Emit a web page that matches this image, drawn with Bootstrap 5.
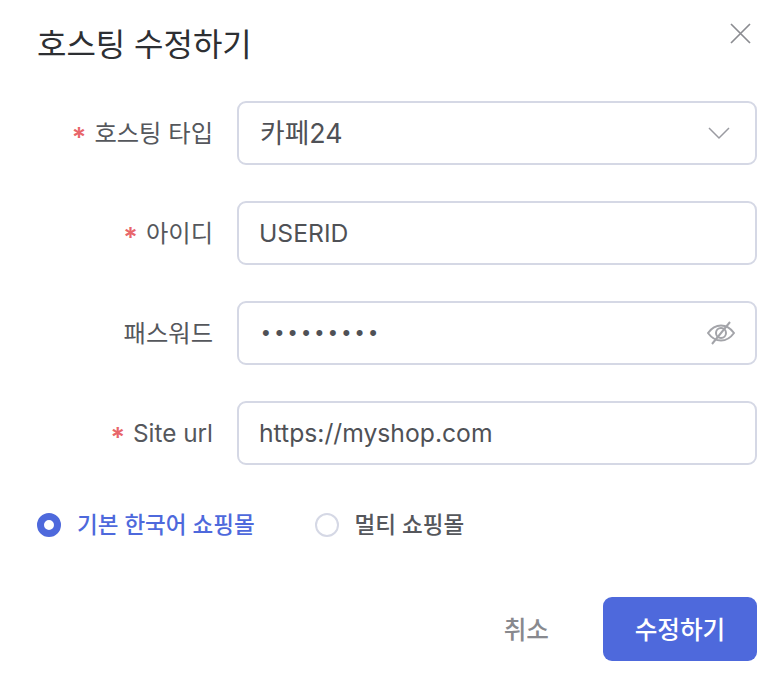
<!DOCTYPE html>
<html lang="ko"><head><meta charset="utf-8">
<link rel="stylesheet" href="https://cdn.jsdelivr.net/npm/bootstrap@5.3.0/dist/css/bootstrap.min.css">
<style>
html,body{height:686px;overflow:hidden;background:#fff}
body{font-family:Inter,"Noto Sans CJK KR",sans-serif;color:#4f5156}
.dlg{padding:24px 23px 0 37px;position:relative}
.dlg-title{font-size:32px;line-height:42px;font-weight:400;color:#2d2f33;margin:0 0 35px;letter-spacing:-.05px}
.x-close{position:absolute;top:21px;right:28px;width:24px;height:24px;padding:0;border:0;background:none;line-height:0}
.frow{height:64px;margin-bottom:36px}
.flabel{width:176px;margin:0 24px 0 0;text-align:right;font-size:24.3px;line-height:32px;color:#55575c;white-space:nowrap}
.req{color:#e8666a;margin-right:8px;font-size:27px;font-weight:600;line-height:0;vertical-align:-5px}
.fbox{position:relative;flex:1 1 auto}
.form-control.finput{height:64px;border:2px solid #d5d8e5;border-radius:9px;padding:0 20px;font-size:24.7px;color:#4f5156;box-shadow:none}
.form-control.finput.hanval{font-size:26.8px;padding:0 21px 3px}
.form-control.finput.pw{font-family:"Liberation Sans",sans-serif;font-size:22px;letter-spacing:5.7px;padding:0 23px}
.ficon{position:absolute;top:50%;transform:translateY(-50%);line-height:0}
.radios{margin:0;height:48px;gap:60px}
.ropt{gap:16px;font-size:22.5px;line-height:32px;font-weight:500;color:#55575c}
.rdot{width:24px;height:24px;border-radius:50%;border:2px solid #d5d8e5;display:block;flex:none}
.rdot.on{border:7px solid #4e69dc}
.ropt.on{color:#4e69dc}
.foot{margin-top:48px;gap:54px}
.btn-x{font-size:24.6px;font-weight:500;color:#88898e;padding:2px 0 0;border:0}
.btn-save{width:154px;height:64px;background:#4e69dc;border:0;border-radius:9px;color:#fff;font-size:24.6px;font-weight:500;padding:2px 0 0}
.btn-save:hover{background:#4e69dc;color:#fff}
</style></head><body>
<div class="dlg">
<h5 class="dlg-title">호스팅 수정하기</h5>
<button type="button" class="x-close" aria-label="닫기"><svg width="24" height="24" viewBox="0 0 24 24" fill="none" stroke="#8b8c91" stroke-width="1.7"><path d="M3 3 22 22M22 3 3 22"/></svg></button>
<form>
<div class="d-flex align-items-center frow">
<label class="flabel"><span class="req">*</span>호스팅 타입</label>
<div class="fbox"><input class="form-control finput hanval" value="카페24" readonly>
<span class="ficon" style="right:27px"><svg width="22" height="13" viewBox="0 0 22 13" fill="none" stroke="#9a9ba1" stroke-width="1.5"><path d="M1 1.5 11 11.5 21 1.5"/></svg></span></div>
</div>
<div class="d-flex align-items-center frow">
<label class="flabel"><span class="req">*</span>아이디</label>
<div class="fbox"><input class="form-control finput" value="USERID"></div>
</div>
<div class="d-flex align-items-center frow">
<label class="flabel">패스워드</label>
<div class="fbox"><input class="form-control finput pw" type="password" value="123456789">
<span class="ficon" style="right:22px"><svg width="28" height="24" viewBox="0 0 28 24" fill="none" stroke="#a3a4a9" stroke-width="2"><path d="M1 12C5 6.500 9 4.500 14 4.500S23 6.500 27 12C23 17.500 19 19.500 14 19.500S5 17.500 1 12Z"/><circle cx="14" cy="12" r="5"/><path d="M23 1 5 23"/></svg></span></div>
</div>
<div class="d-flex align-items-center frow">
<label class="flabel"><span class="req">*</span>Site url</label>
<div class="fbox"><input class="form-control finput" value="https://myshop.com"></div>
</div>
<div class="d-flex align-items-center radios">
<div class="d-flex align-items-center ropt on"><span class="rdot on"></span>기본 한국어 쇼핑몰</div>
<div class="d-flex align-items-center ropt"><span class="rdot"></span>멀티 쇼핑몰</div>
</div>
<div class="d-flex justify-content-end align-items-center foot">
<button type="button" class="btn btn-x">취소</button>
<button type="button" class="btn btn-save">수정하기</button>
</div>
</form>
</div>
</body></html>
